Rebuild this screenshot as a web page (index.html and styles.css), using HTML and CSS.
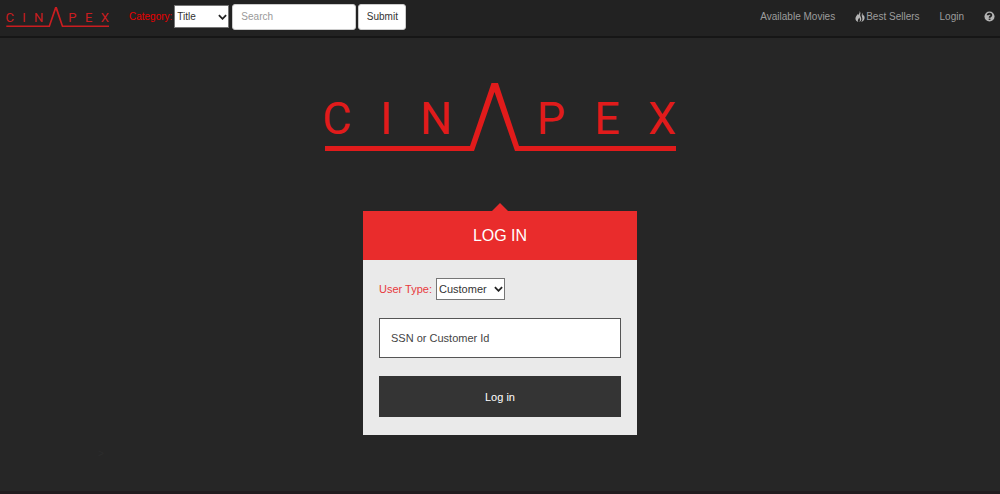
FILE: index.html
```html
<!DOCTYPE html>
<html lang="en">
<head>
<meta charset="utf-8">
<meta name="viewport" content="width=device-width, initial-scale=1">
<title>Cinapex - Log in</title>
<link rel="stylesheet" href="styles.css">
</head>
<body>
<header class="navbar">
  <a class="brand" href="#" aria-label="Cinapex home">
    <svg class="logo" viewBox="0 0 352 68">
      <path d="M1 63H146L167.500 0H174L195 63H352V68H191L170.500 9L150 68H1Z"/>
      <text class="logo-text" x="13 62 112 227 283 338" y="51">CINPEX</text>
    </svg>
  </a>
  <form class="search">
    <label for="category">Category:</label>
    <span class="select category-select">
      <select id="category"><option>Title</option><option>Genre</option></select>
      <svg class="chevron" viewBox="0 0 10 6"><path d="M1 1L5 5L9 1"/></svg>
    </span>
    <input class="search-box" type="text" placeholder="Search" aria-label="Search">
    <button class="submit" type="submit">Submit</button>
  </form>
  <nav class="links">
    <a href="#">Available Movies</a>
    <a href="#"><svg class="fire" viewBox="0 0 10 12"><path d="M4.600 0C5 2 3.900 3.200 2.800 4.500C2.600 3.900 2.500 3.500 2.200 3C2 4.800 0 6 0 8.200C0 10.200 1.400 11.400 3.200 12C1.800 9.700 3.800 8.700 4.100 7C5.200 8.300 5.200 10.500 4.300 12C6.200 11 6.800 9.300 6.200 7.500C5.700 5.800 4.500 4.800 5.500 2.800C5.500 1.700 5.300.700 4.600 0ZM7.200 2C7.400 3.600 6.400 4.600 7.200 6.200C8 8.300 7.800 10.300 6.300 12C9 11.200 10 9.300 10 7.400C10 5.900 9.200 5.100 8.700 4.200C8.600 4.800 8.600 5.100 8.300 5.500C8 4.300 8.100 3.100 7.200 2Z"/></svg>Best Sellers</a>
    <a href="#">Login</a>
    <a href="#" aria-label="Help"><svg class="help" viewBox="0 0 12 12"><circle cx="6" cy="6" r="5.500"/><path d="M4 4.700C4 2.400 8 2.500 8 4.500C8 6 6.100 5.700 6.100 7.300"/><path d="M6.100 8.300V9.700"/></svg></a>
  </nav>
</header>

<main class="page">
  <svg class="logo hero-logo" viewBox="0 0 352 68" role="img" aria-label="Cinapex">
    <path d="M1 63H146L167.500 0H174L195 63H352V68H191L170.500 9L150 68H1Z"/>
    <text class="logo-text" x="13 62 112 227 283 338" y="51">CINPEX</text>
  </svg>
  <section class="card">
    <h1 class="card-title">LOG IN</h1>
    <form class="card-body">
      <div class="user-type">
        <label for="user-type">User Type:</label>
        <span class="select user-select">
          <select id="user-type"><option>Customer</option><option>Employee</option></select>
          <svg class="chevron" viewBox="0 0 10 6"><path d="M1 1L5 5L9 1"/></svg>
        </span>
      </div>
      <input class="field" type="text" placeholder="SSN or Customer Id" aria-label="SSN or Customer Id">
      <button class="login" type="submit">Log in</button>
    </form>
  </section>
  <p class="stray">&gt;</p>
</main>
</body>
</html>
```
FILE: styles.css
```css
* { box-sizing: border-box; }

body {
  display: flex;
  flex-direction: column;
  min-height: 100vh;
  margin: 0;
  background: #262626;
  border-bottom: 3px solid #211c1f;
  font-family: "Liberation Sans", Arial, sans-serif;
  font-size: 11px;
}

input, select, button { font: inherit; margin: 0; }

.logo { overflow: visible; }
.logo-text {
  font-family: Roboto, "Liberation Sans", sans-serif;
  font-size: 45px;
  text-anchor: middle;
}

.navbar {
  display: flex;
  align-items: center;
  min-height: 38px;
  padding: 0 5px 3px 6px;
  background: #222;
  border-bottom: 2px solid #161616;
  font-size: 10px;
}

.brand { display: flex; margin-right: 20px; }
.brand .logo { width: 103px; height: 20px; fill: #c91d20; }

.search { display: flex; align-items: center; }
.search label { margin-right: 2px; color: #e80000; }

.select { position: relative; display: inline-flex; }
.select select {
  width: 100%;
  appearance: none;
  border: 1px solid #767676;
  border-radius: 0;
  padding: 0 2px;
  background: #fff;
  color: #333;
}
.chevron {
  position: absolute;
  right: 2px;
  top: 50%;
  width: 9px;
  height: 6px;
  margin-top: -3px;
  fill: none;
  stroke: #222;
  stroke-width: 2;
  pointer-events: none;
}
.category-select { width: 55px; margin-right: 3px; }
.category-select select { height: 23px; }

.search-box {
  width: 124px;
  height: 26px;
  margin-right: 2px;
  padding: 0 8px;
  border: 1px solid #ccc;
  border-radius: 3px;
  background: #fff;
}
.search-box::placeholder { color: #999; }

.submit {
  width: 48px;
  height: 26px;
  padding: 0;
  border: 1px solid #ccc;
  border-radius: 3px;
  background: #fff;
  color: #333;
}

.links { display: flex; align-items: center; gap: 20px; margin-left: auto; }
.links a { display: flex; align-items: center; color: #9d9d9d; text-decoration: none; }
.fire { width: 10px; height: 11px; margin-right: 1px; fill: #b5b5b5; }
.help { width: 11px; height: 11px; fill: #b5b5b5; }
.help path { fill: none; stroke: #222; stroke-width: 2; }

.page {
  display: flex;
  flex-direction: column;
  align-items: center;
  padding-top: 45px;
}

.hero-logo { width: 352px; height: 68px; fill: #e11b1b; }

.card {
  width: 274px;
  max-width: 100%;
  margin-top: 60px;
  background: #eaeaea;
}

.card-title {
  position: relative;
  margin: 0;
  padding: 16px;
  background: #e92c2c;
  color: #fff;
  font-size: 16px;
  font-weight: 400;
  line-height: 17px;
  text-align: center;
}
.card-title::before {
  content: "";
  position: absolute;
  left: 50%;
  bottom: 100%;
  margin-left: -8px;
  border: 8px solid transparent;
  border-top-width: 0;
  border-bottom-color: #e92c2c;
}

.card-body {
  display: flex;
  flex-direction: column;
  gap: 18px;
  padding: 18px 16px;
}

.user-type { display: flex; align-items: center; gap: 4px; }
.user-type label { color: #e8393c; }
.user-select { width: 69px; }
.user-select select { height: 22px; }

.field {
  width: 100%;
  height: 40px;
  padding: 0 11px;
  border: 1px solid #555;
  background: #fff;
  color: #333;
}
.field::placeholder { color: #444; }

.login {
  height: 41px;
  border: 0;
  background: #343434;
  color: #fff;
}

.stray {
  align-self: flex-start;
  margin: 13px 0 0 98px;
  color: #2c2c2c;
  font-size: 10px;
}
```
